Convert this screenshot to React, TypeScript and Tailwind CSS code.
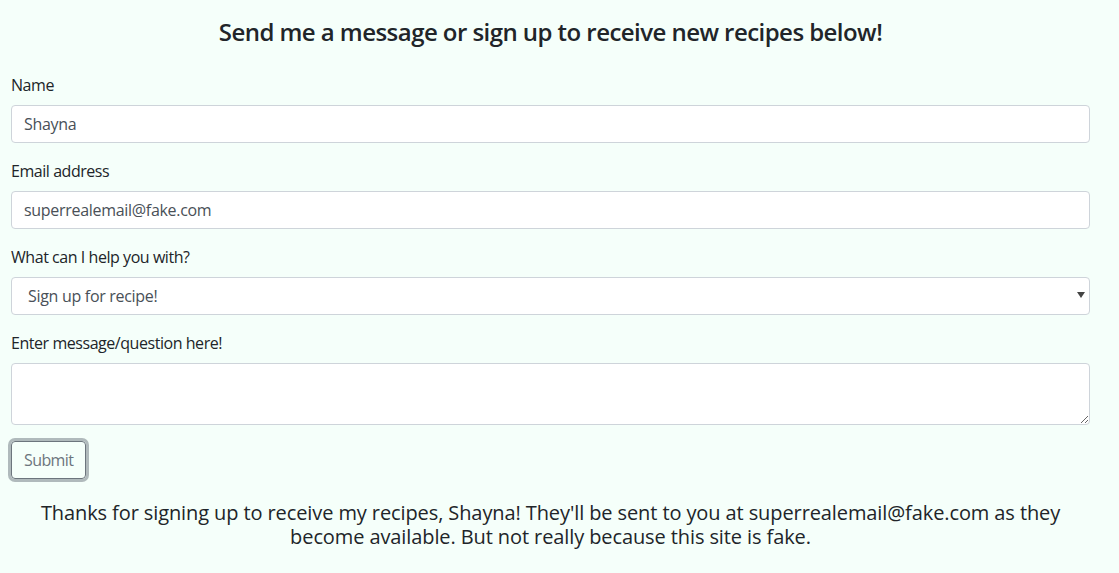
import React from 'react';

const font = { fontFamily: '"Open Sans", "Noto Sans", Arial, sans-serif' };

const Field: React.FC<{ label: string; children: React.ReactNode }> = ({ label, children }) => (
  <div className="mb-4">
    <label className="block mb-2 text-[16px] leading-6 tracking-[-0.45px] text-[#212529]">{label}</label>
    {children}
  </div>
);

const inputCls =
  'block w-full h-[38px] px-3 text-[16px] tracking-[-0.3px] text-[#495057] bg-white border border-[#ced4da] rounded-[4px] outline-none';

const App: React.FC = () => {
  return (
    <div className="min-h-[573px] bg-[#f5fffa] text-[#212529]" style={font}>
      <div className="pl-[11px] pr-[29px] pt-[17px]">
        <h4 className="text-center text-[24px] font-semibold leading-[29px] tracking-[-0.55px] mb-[27px]">
          Send me a message or sign up to receive new recipes below!
        </h4>
        <form>
          <Field label="Name">
            <input className={inputCls} defaultValue="Shayna" />
          </Field>
          <Field label="Email address">
            <input className={inputCls} defaultValue="superrealemail@fake.com" />
          </Field>
          <Field label="What can I help you with?">
            <div className="relative">
              <select className={inputCls + ' appearance-none pl-[16px]'} defaultValue="signup">
                <option value="signup">Sign up for recipe!</option>
                <option value="message">Send a message</option>
              </select>
              <span className="pointer-events-none absolute right-[5px] top-[15px] w-0 h-0 border-l-[4px] border-r-[4px] border-t-[6px] border-l-transparent border-r-transparent border-t-[#444]" />
            </div>
          </Field>
          <Field label="Enter message/question here!">
            <textarea
              rows={2}
              className="block w-full h-[62px] px-3 py-1.5 text-[16px] text-[#495057] bg-white border border-[#ced4da] rounded-[4px] outline-none"
            />
          </Field>
          <button
            type="button"
            className="h-[38px] px-3 text-[16px] tracking-[-0.6px] text-[#6c757d] border border-[#6c757d] rounded-[4px] shadow-[0_0_0_3px_rgba(108,117,125,0.5)]"
          >
            Submit
          </button>
        </form>
        <p className="mt-[22px] text-center text-[20px] leading-6 tracking-[-0.1px]">
          Thanks for signing up to receive my recipes, Shayna! They'll be sent to you at superrealemail@fake.com as they
          become available. But not really because this site is fake.
        </p>
      </div>
    </div>
  );
};

export default App;
